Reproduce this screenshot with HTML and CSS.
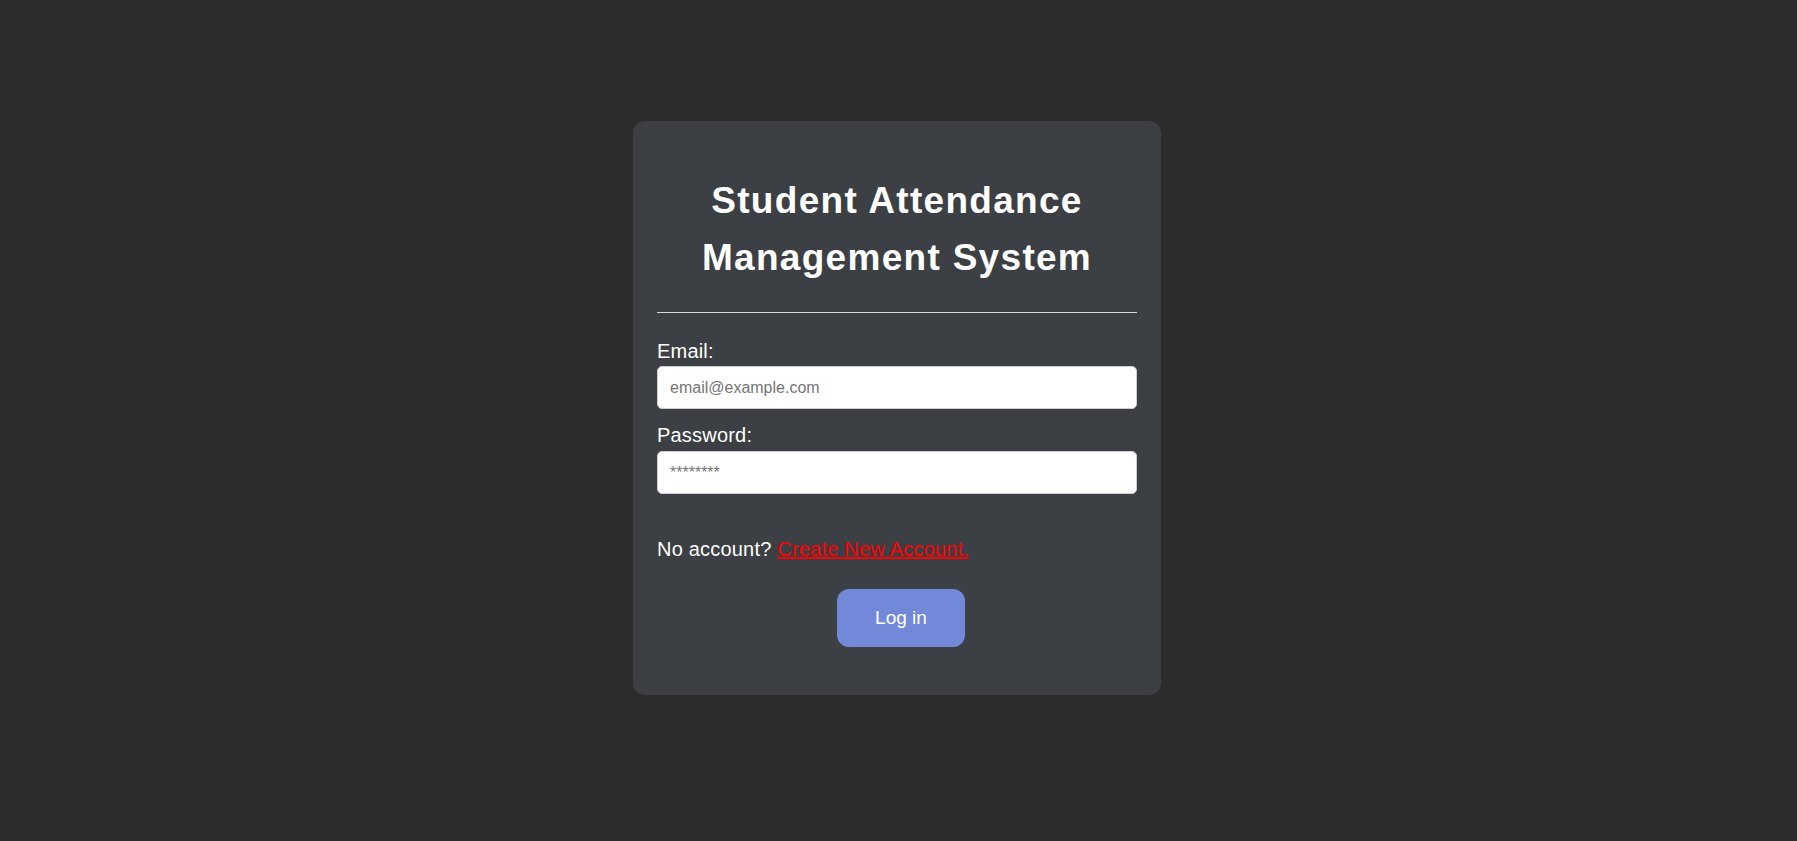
FILE: index.html
```html
<!DOCTYPE html>
<html lang="en">
<head>
<meta charset="utf-8">
<title>Student Attendance Management System</title>
<link rel="stylesheet" href="styles.css">
</head>
<body>
  <main class="card">
    <h1 class="title">Student Attendance Management System</h1>
    <hr class="divider">
    <form class="form">
      <label class="label" for="email">Email:</label>
      <input class="input" id="email" type="email" placeholder="email@example.com">
      <label class="label label-gap" for="password">Password:</label>
      <input class="input" id="password" type="password" placeholder="********">
      <p class="signup">No account? <a class="signup-link" href="#">Create New Account.</a></p>
      <div class="actions">
        <button class="btn" type="button">Log in</button>
      </div>
    </form>
  </main>
</body>
</html>
```

FILE: styles.css
```css
html, body {
  margin: 0;
  padding: 0;
}

body {
  background: #2c2c2c;
  font-family: "Liberation Sans", Arial, sans-serif;
  color: #ffffff;
  min-height: 100vh;
  display: flex;
  justify-content: center;
  align-items: flex-start;
}

.card {
  box-sizing: border-box;
  width: 528px;
  margin-top: 121px;
  margin-right: 3px;
  background: #3c3f43;
  border-radius: 12px;
  padding: 51px 24px 48px;
  display: flex;
  flex-direction: column;
}

.title {
  margin: 0;
  font-size: 37px;
  font-weight: bold;
  line-height: 57px;
  letter-spacing: 1.3px;
  text-align: center;
  padding: 0 20px;
}

.divider {
  margin: 26px 0 0;
  border: 0;
  height: 1px;
  background: #d9d9d9;
}

.form {
  display: flex;
  flex-direction: column;
  margin-top: 27px;
}

.label {
  font-size: 20px;
  line-height: 22px;
  letter-spacing: 0.2px;
  margin-bottom: 4px;
}

.label-gap {
  margin-top: 15px;
  margin-bottom: 5px;
}

.input {
  box-sizing: border-box;
  height: 43px;
  width: 100%;
  margin: 0;
  border: 1px solid #cfcfcf;
  border-radius: 5px;
  padding: 0 12px;
  font-family: "Liberation Sans", Arial, sans-serif;
  font-size: 16px;
  color: #222;
  background: #ffffff;
}

.input::placeholder {
  color: #757575;
}

.signup {
  margin: 44px 0 0;
  font-size: 20px;
  line-height: 22px;
  letter-spacing: 0.2px;
}

.signup-link {
  color: #ff0000;
  text-decoration: underline;
}

.actions {
  display: flex;
  justify-content: center;
  margin-top: 29px;
  padding-left: 8px;
}

.btn {
  box-sizing: border-box;
  width: 128px;
  height: 58px;
  border: 0;
  border-radius: 12px;
  background: #7289da;
  color: #ffffff;
  font-family: "Liberation Sans", Arial, sans-serif;
  font-size: 19px;
  cursor: pointer;
}
```
